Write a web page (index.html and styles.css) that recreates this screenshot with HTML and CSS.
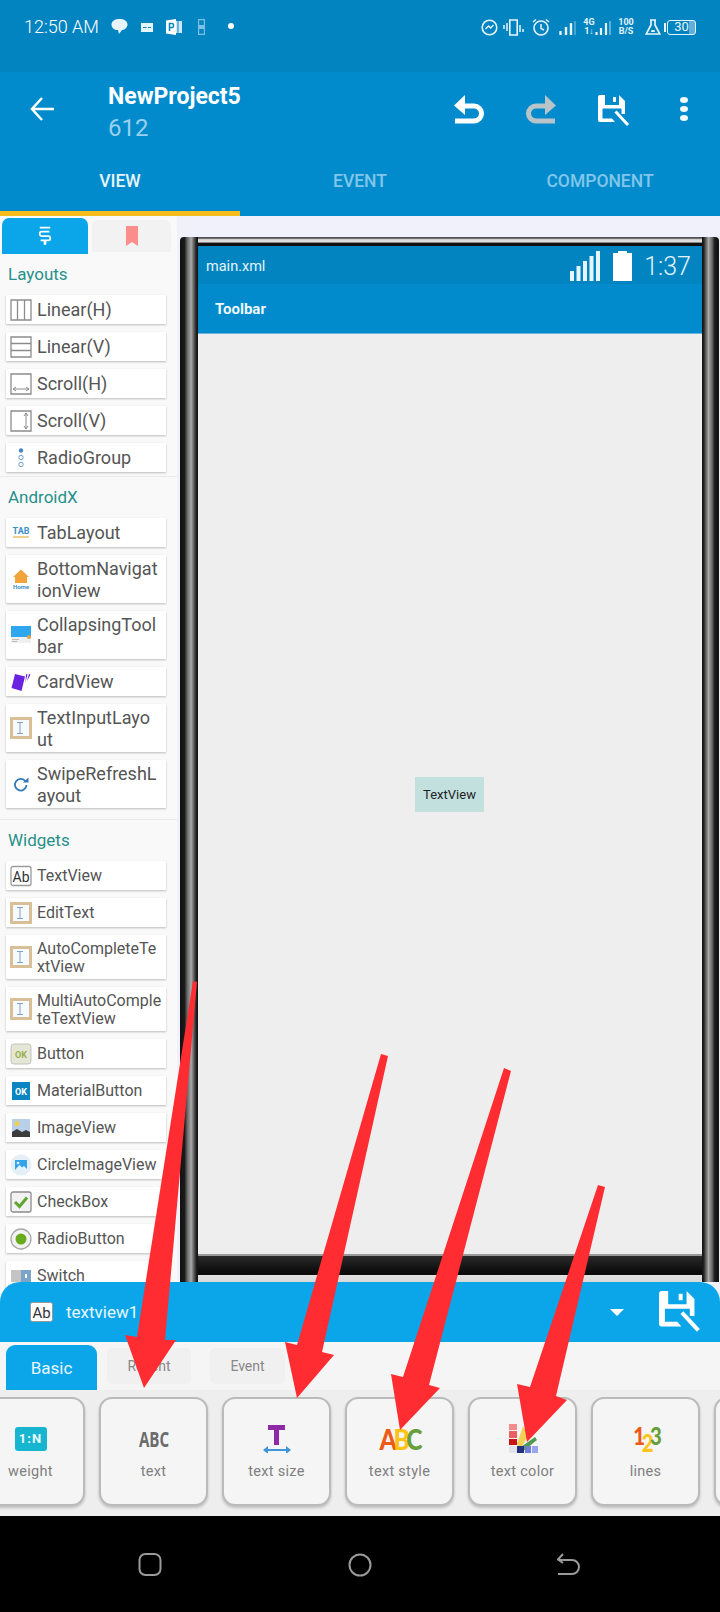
FILE: index.html
```html
<!DOCTYPE html>
<html lang="en">
<head>
  <meta charset="UTF-8" />
  <meta name="viewport" content="width=device-width, initial-scale=1.0"/>
  <title>NewProject5</title>
  <link rel="stylesheet" href="styles.css">
</head>
<body>

  <svg class="defs" width="0" height="0">
    <symbol id="i-edit" viewBox="0 0 22 22">
      <rect x="1.500" y="1.500" width="19" height="19" fill="#f6fafc" stroke="#d9bf98" stroke-width="3"/>
      <path d="M7 5.500h6M7 16.500h6M10 5.500v11" stroke="#7fa3c4" stroke-width="1" fill="none"/>
    </symbol>
    <symbol id="i-save" viewBox="0 0 32 32">
      <path fill="currentColor" fill-rule="evenodd" d="M0 2Q0 0 2 0H21L27 6V19H23.500V13.500H4.500V23.500H14L17 27H2Q0 27 0 25ZM7 0V10H21V0ZM15 2H18V7H15Z"/>
      <path d="M17.500 16.500L30 30" stroke="currentColor" stroke-width="3" fill="none"/>
    </symbol>
    <symbol id="i-undo" viewBox="0 0 32 32">
      <path d="M2 28H21a7.500 7.500 0 0 0 0-15H9" stroke="currentColor" stroke-width="5" fill="none"/>
      <path d="M12 2V22L1 12.500Z" fill="currentColor"/>
    </symbol>
  </svg>

  <!-- Phone status bar -->
  <div class="status">
    <span class="clock">12:50 AM</span>
    <svg class="s-bubble" width="17" height="17" viewBox="0 0 17 17"><path fill="#e6f4fb" d="M8.500 1C13 1 16.500 3 16.500 6.500S13 12 11 12L8 16L7 12C3 12 .5 10 .5 6.500S4 1 8.500 1Z"/></svg>
    <svg class="s-sms" width="12" height="9" viewBox="0 0 12 9"><path fill="#e6f4fb" d="M0 0H12V9H0Z"/><path stroke="#0284c0" stroke-width="1.200" d="M2 4.500H5.500M7 4.500H10"/></svg>
    <svg class="s-ppt" width="16" height="16" viewBox="0 0 16 16"><path fill="#cfe8f6" d="M9 2H16V14H9Z"/><path stroke="#0284c0" d="M12 2V14"/><path fill="#fff" d="M0 1.500L10 0V16L0 14.500Z"/><path fill="none" stroke="#0284c0" stroke-width="1.500" d="M3.500 12V4.500H6Q7.500 4.500 7.500 6.500T6 8.500H3.500"/></svg>
    <svg class="s-sim" width="7" height="16" viewBox="0 0 7 16"><path fill="none" stroke="#7cc0e4" stroke-width="1.200" d="M.6.6H6.400V15.400H.6Z"/><path fill="#7cc0e4" d="M1 6H6V10H1Z"/></svg>
    <i class="s-dot"></i>

    <div class="status-right">
      <svg width="17" height="17" viewBox="0 0 17 17"><circle cx="8.500" cy="8.500" r="7.300" fill="none" stroke="#e6f4fb" stroke-width="1.600"/><path d="M4.500 10L7.500 7L9.500 9L12.500 6" fill="none" stroke="#e6f4fb" stroke-width="1.400"/></svg>
      <svg class="m-vib" width="23" height="17" viewBox="0 0 23 17"><path fill="none" stroke="#e6f4fb" stroke-width="1.600" d="M6.800 1H14.200V16H6.800Z"/><path stroke="#e6f4fb" stroke-width="1.500" d="M4 4V12M1 6V10M17 6V13M20 10V13"/></svg>
      <svg class="m-alarm" width="18" height="18" viewBox="0 0 18 18"><circle cx="9" cy="10" r="7" fill="none" stroke="#e6f4fb" stroke-width="1.600"/><path d="M9 6V10.500L12 12M1 4L4 1.500M17 4L14 1.500" fill="none" stroke="#e6f4fb" stroke-width="1.500"/></svg>
      <svg class="m-sig" width="17" height="15" viewBox="0 0 17 15"><path stroke="#e6f4fb" stroke-width="2.400" d="M1.500 15V11M7 15V7M12 15V3"/><path stroke="#5fb0dc" stroke-width="1.500" d="M16 15V1"/></svg>
      <span class="s-net">4G<br>1↓</span>
      <svg class="m-sig2" width="16" height="15" viewBox="0 0 16 15"><path stroke="#e6f4fb" stroke-width="2.200" d="M1.500 15V12M6 15V8M11 15V3"/><path stroke="#7cc0e4" stroke-width="1.500" d="M15 15V1"/></svg>
      <span class="s-speed">100<br>B/S</span>
      <svg class="m-flask" width="16" height="16" viewBox="0 0 16 16"><path fill="none" stroke="#e6f4fb" stroke-width="1.700" d="M5 1H11M6 1V6L1.200 15H14.800L10 6V1"/><path fill="#e6f4fb" d="M6.500 11H9.500L10 13H6Z"/></svg>
      <i class="s-nub"></i>
      <span class="s-batt">30</span>
    </div>
  </div>

  <!-- App bar -->
  <div class="appbar">
    <svg class="back" width="25" height="32" viewBox="0 0 25 32"><path d="M24 16H3M12 5L2 16L12 27" fill="none" stroke="#fff" stroke-width="2.500"/></svg>
    <div class="titles">
      <div class="title">NewProject5</div>
      <div class="subtitle">612</div>
    </div>
    <svg class="act undo"><use href="#i-undo"/></svg>
    <svg class="act redo"><use href="#i-undo"/></svg>
    <svg class="act save"><use href="#i-save"/></svg>
    <div class="more"><i></i><i></i><i></i></div>
  </div>

  <div class="tabs">
    <div class="tab active">VIEW</div>
    <div class="tab">EVENT</div>
    <div class="tab">COMPONENT</div>
  </div>

  <div class="workspace">
    <!-- Widget palette -->
    <div class="sidebar">
      <div class="side-tabs">
        <div class="side-tab on">
          <svg width="14" height="20" viewBox="0 0 16 22"><path d="M2 1.500H14M13 6H4Q2 6 2 8.500T4 11H12Q14 11 14 13.500T12 16H3" fill="none" stroke="#fff" stroke-width="2"/><path d="M8 16V21" stroke="#fff" stroke-width="3"/></svg>
        </div>
        <div class="side-tab">
          <svg width="14" height="20" viewBox="0 0 14 20"><path d="M1 0H13V20L7 16L1 20Z" fill="#fb8d8a"/></svg>
        </div>
      </div>

      <div class="group">
        <div class="group-name">Layouts</div>
        <div class="item"><svg viewBox="0 0 22 22"><path d="M1 1H21V21H1ZM7.500 1V21M14.500 1V21" fill="#fff" stroke="#8c8c8c" stroke-width="1.300"/></svg>Linear(H)</div>
        <div class="item"><svg viewBox="0 0 22 22"><path d="M1 1H21V21H1ZM1 7.500H21M1 14.500H21" fill="#fff" stroke="#8c8c8c" stroke-width="1.300"/></svg>Linear(V)</div>
        <div class="item"><svg viewBox="0 0 22 22"><path d="M1 1H21V21H1Z" fill="#fff" stroke="#8c8c8c" stroke-width="1.300"/><path d="M3 16H19M3 16L6 14M3 16L6 18M19 16L16 14M19 16L16 18" fill="none" stroke="#8c8c8c"/></svg>Scroll(H)</div>
        <div class="item"><svg viewBox="0 0 22 22"><path d="M1 1H21V21H1Z" fill="#fff" stroke="#8c8c8c" stroke-width="1.300"/><path d="M16 3V19M16 3L14 6M16 3L18 6M16 19L14 16M16 19L18 16" fill="none" stroke="#8c8c8c"/></svg>Scroll(V)</div>
        <div class="item"><svg viewBox="0 0 22 22"><circle cx="11" cy="3.500" r="2.200" fill="#4a86c0"/><circle cx="11" cy="10.500" r="2.200" fill="#fff" stroke="#4a86c0" stroke-width=".8"/><circle cx="11" cy="17.500" r="2.200" fill="#fff" stroke="#4a86c0" stroke-width=".8"/></svg>RadioGroup</div>
      </div>

      <div class="group">
        <div class="group-name">AndroidX</div>
        <div class="item"><svg viewBox="0 0 22 22"><text class="t-tab" x="11" y="12" text-anchor="middle">TAB</text><path d="M3 15H19" stroke="#ecc06a" stroke-width="1.500"/></svg>TabLayout</div>
        <div class="item wrap"><svg viewBox="0 0 22 22"><path d="M11 1.500L19 9H17V15H5V9H3Z" fill="#f2a33a"/><text class="t-home" x="11" y="21" text-anchor="middle">Home</text></svg>BottomNavigat<br>ionView</div>
        <div class="item wrap"><svg viewBox="0 0 22 22"><path d="M1 2H21V13H1Z" fill="#2ea7ee"/><path d="M1 13H21V19H1Z" fill="#f0f0f0"/><circle cx="19" cy="13" r="2" fill="#e8a040"/><path d="M2 15.500H9M2 17.500H7" stroke="#bbb"/></svg>CollapsingTool<br>bar</div>
        <div class="item"><svg viewBox="0 0 22 22"><path d="M5 3L15 5.500L11.500 20L1.500 17Z" fill="#6a24e0"/><path d="M16 3L17.500 3.500L15.500 11ZM19 3L20.500 3.500L17 10Z" fill="#6a24e0"/></svg>CardView</div>
        <div class="item wrap"><svg><use href="#i-edit"/></svg>TextInputLayo<br>ut</div>
        <div class="item wrap last"><svg viewBox="0 0 22 22"><path d="M15.500 8.500A5.800 5.800 0 1 0 16.500 12" fill="none" stroke="#2f77b5" stroke-width="1.800"/><path d="M13 9.500H18.500V4.500Z" fill="#2f77b5"/></svg>SwipeRefreshL<br>ayout</div>
      </div>

      <div class="group small">
        <div class="group-name">Widgets</div>
        <div class="item"><svg viewBox="0 0 22 22"><rect x="1" y="1.500" width="20" height="19" rx="2" fill="#fff" stroke="#9a9a9a" stroke-width="1.300"/><text class="t-ab" x="11" y="16.500" text-anchor="middle">Ab</text></svg>TextView</div>
        <div class="item"><svg><use href="#i-edit"/></svg>EditText</div>
        <div class="item tight"><svg><use href="#i-edit"/></svg>AutoCompleteTe<br>xtView</div>
        <div class="item tight"><svg><use href="#i-edit"/></svg>MultiAutoComple<br>teTextView</div>
        <div class="item"><svg viewBox="0 0 22 22"><rect x="1" y="1" width="20" height="20" rx="3" fill="#e4e6d6" stroke="#c4c4b8"/><text class="t-ok" x="11" y="15" text-anchor="middle" fill="#9ab04a">OK</text></svg>Button</div>
        <div class="item"><svg viewBox="0 0 22 22"><rect x="2" y="2" width="18" height="18" fill="#0a85c2"/><text class="t-ok" x="11" y="15" text-anchor="middle" fill="#fff">OK</text></svg>MaterialButton</div>
        <div class="item"><svg viewBox="0 0 22 22"><rect x="2" y="2" width="18" height="18" fill="#b7cfe8"/><circle cx="7" cy="6.500" r="2.500" fill="#f2cf4a"/><path d="M2 20V15L7 12L12 15L16 13L20 15V20Z" fill="#3c3c3c"/></svg>ImageView</div>
        <div class="item"><svg viewBox="0 0 22 22"><circle cx="11" cy="11" r="10.500" fill="#e6eff5"/><rect x="5" y="6" width="12" height="10" fill="#36a4ea"/><circle cx="8" cy="9" r="1.300" fill="#e3f3fd"/><path d="M5 16L9.500 11L12 13.500L14 12L17 15V16Z" fill="#e3f3fd"/></svg>CircleImageView</div>
        <div class="item"><svg viewBox="0 0 22 22"><rect x="1" y="1" width="20" height="20" rx="2" fill="#f2f2f2" stroke="#8c8c8c" stroke-width="1.300"/><path d="M5 11L9.500 15.500L17 6.500" fill="none" stroke="#5fa52e" stroke-width="3"/></svg>CheckBox</div>
        <div class="item"><svg viewBox="0 0 22 22"><circle cx="11" cy="11" r="10" fill="#f2f2f2" stroke="#a8a8a8" stroke-width="1.300"/><circle cx="11" cy="11" r="5.500" fill="#68ab1e"/></svg>RadioButton</div>
        <div class="item"><svg viewBox="0 0 22 22"><path d="M1 5H21V17H1Z" fill="#c4c4c4"/><path d="M11 5H21V17H11Z" fill="#7ca4c9"/><path d="M15 9H17V13H15Z" fill="#fff"/></svg>Switch</div>
      </div>
    </div>

    <!-- Device preview -->
    <div class="canvas">
      <div class="frame">
        <div class="screen">
          <div class="screen-status">
            <span class="file">main.xml</span>
            <svg class="bars" width="31" height="30" viewBox="0 0 31 30"><path fill="#e6f4fb" d="M0 20H4V30H0ZM6.500 15H10.500V30H6.500ZM13 10H17V30H13ZM19.500 5H23.500V30H19.500ZM26 0H30V30H26Z"/></svg>
            <svg class="battery" width="19" height="30" viewBox="0 0 19 30"><path fill="#fff" d="M5 0H14V2H19V30H0V2H5Z"/></svg>
            <span class="time">1:37</span>
          </div>
          <div class="screen-toolbar">Toolbar</div>
          <div class="screen-body">
            <div class="textview">TextView</div>
          </div>
        </div>
      </div>
    </div>
  </div>

  <!-- Properties panel -->
  <div class="panel">
    <div class="panel-head">
      <svg class="ab" width="23" height="20" viewBox="0 0 23 20"><rect x=".5" y=".5" width="22" height="19" rx="2" fill="#fff" stroke="#9a9a9a"/><text class="t-ab2" x="11.500" y="16" text-anchor="middle">Ab</text></svg>
      <span class="view-id">textview1</span>
      <i class="caret"></i>
      <svg class="panel-save"><use href="#i-save"/></svg>
    </div>
    <div class="subtabs">
      <div class="subtab on">Basic</div>
      <div class="subtab recent">Recent</div>
      <div class="subtab event">Event</div>
    </div>
    <div class="cards">
      <div class="card">
        <div class="card-icon"><span class="ratio">1:N</span></div>
        <div class="card-label">weight</div>
      </div>
      <div class="card">
        <div class="card-icon"><span class="abc">ABC</span></div>
        <div class="card-label">text</div>
      </div>
      <div class="card">
        <div class="card-icon"><svg width="28" height="28" viewBox="0 0 28 28"><path d="M5 0H22V5H16V20H11V5H5Z" fill="#8e2aa6"/><path d="M3 25H25" stroke="#3d96dc" stroke-width="2"/><path d="M0 25L5 21V29ZM28 25L23 21V29Z" fill="#3d96dc"/></svg></div>
        <div class="card-label">text size</div>
      </div>
      <div class="card">
        <div class="card-icon"><span class="fun"><b class="c1">A</b><b class="c2">B</b><b class="c3">C</b></span></div>
        <div class="card-label">text style</div>
      </div>
      <div class="card">
        <div class="card-icon"><svg width="30" height="30" viewBox="0 0 30 30"><path d="M1 0H9V6H1Z" fill="#f08c8c"/><path d="M1 7H9V14H1Z" fill="#ea5f5f"/><path d="M1 15H9V21H1Z" fill="#c81414"/><path d="M1 22H9V29H1Z" fill="#dfe3ea"/><path d="M9 20L15 2L20 12L12 26Z" fill="#f6cf55"/><path d="M10 25L27 13L29 16L13 29Z" fill="#4f9a4f"/><path d="M9 22H16V29H9Z" fill="#25307f"/><path d="M17 22H23V29H17Z" fill="#6f7fd8"/><path d="M24 22H30V29H24Z" fill="#98a6f0"/></svg></div>
        <div class="card-label">text color</div>
      </div>
      <div class="card">
        <div class="card-icon"><span class="fun nums"><b class="c1">1</b><b class="c2">2</b><b class="c3">3</b></span></div>
        <div class="card-label">lines</div>
      </div>
      <div class="card"></div>
    </div>
  </div>

  <!-- System nav -->
  <div class="navbar">
    <svg width="24" height="23" viewBox="0 0 24 23"><rect x="1.500" y="1" width="21" height="21" rx="6" fill="none" stroke="#9a9a9a" stroke-width="2"/></svg>
    <svg width="24" height="24" viewBox="0 0 24 24"><circle cx="12" cy="12" r="10.500" fill="none" stroke="#9a9a9a" stroke-width="2"/></svg>
    <svg width="23" height="23" viewBox="0 0 23 23"><path d="M1 7H15a7 7 0 0 1 0 14H1M6 1L1 6.500L6 10" fill="none" stroke="#9a9a9a" stroke-width="2"/></svg>
  </div>

  <!-- Red arrows painted over the screenshot -->
  <svg class="arrows" width="720" height="1612" viewBox="0 0 720 1612">
    <polygon points="193,981 197,982 165,1340 176,1340 144,1388 125,1335 137,1337"/>
    <polygon points="381,1054 388,1056 322,1352 334,1355 297,1398 285,1342 297,1345"/>
    <polygon points="504,1068 511,1071 429,1385 440,1388 400,1430 391,1374 403,1377"/>
    <polygon points="598,1185 605,1187 556,1396 567,1400 527,1442 517,1384 530,1387"/>
  </svg>

</body>
</html>
```

FILE: styles.css
```css
:root {
  --status-blue: #0284c0;
  --bar-blue: #028bcc;
  --sky: #0ba6ea;
}

body {
  font-family: Roboto, "Liberation Sans", sans-serif;
  margin: 0;
  width: 720px;
  height: 1612px;
  overflow: hidden;
  position: relative;
  background: #000;
}

.defs {
  position: absolute;
}

i {
  display: block;
}

/* status bar */
.status {
  height: 72px;
  background: var(--status-blue);
  display: flex;
  align-items: flex-start;
  padding: 0 24px;
  box-sizing: border-box;
  color: #e6f4fb;
}

.status > * {
  margin-top: 18px;
  flex: none;
}

.clock {
  font-size: 18px;
  font-weight: 300;
  line-height: 18px;
  width: 75px;
  white-space: nowrap;
  color: #fff;
}

.s-bubble { margin-left: 12px; }
.s-sms { margin-left: 13px; margin-top: 23px; }
.s-ppt { margin-left: 13px; margin-top: 19px; }
.s-sim { margin-left: 16px; margin-top: 19px; }

.s-dot {
  width: 6px;
  height: 6px;
  border-radius: 50%;
  background: #fff;
  margin-left: 23px;
  margin-top: 23px;
}

.status-right {
  margin-left: auto;
  display: flex;
  align-items: center;
  height: 18px;
}

.m-vib { margin-left: 5px; }
.m-alarm { margin-left: 6px; }
.m-sig { margin-left: 9px; }
.m-flask { margin-left: 10px; }

.s-net, .s-speed {
  font-size: 9px;
  font-weight: 700;
  line-height: 9px;
  text-align: center;
  white-space: nowrap;
}

.s-net { margin-left: 7px; width: 12px; }
.s-speed { margin-left: 6px; width: 18px; }

.s-nub {
  width: 2px;
  height: 9px;
  background: #e6f4fb;
  margin-left: 3px;
}

.s-batt {
  width: 29px;
  height: 15px;
  box-sizing: border-box;
  border: 1.500px solid #e6f4fb;
  border-radius: 3px;
  margin-left: 1px;
  font-size: 13px;
  line-height: 12px;
  text-align: center;
  background: linear-gradient(90deg, transparent 76%, #5fb0dc 76%);
}

/* app bar */
.appbar {
  height: 94px;
  box-sizing: border-box;
  background: var(--bar-blue);
  display: flex;
  align-items: flex-start;
  padding: 9px 32px 0 30px;
  color: #fff;
}

.appbar svg {
  margin-top: 12px;
  flex: none;
}

.titles {
  margin-left: 53px;
  padding-top: 2px;
}

.title {
  font-size: 23px;
  font-weight: 700;
  line-height: 28px;
  white-space: nowrap;
}

.subtitle {
  font-size: 24px;
  line-height: 30px;
  margin-top: 2px;
  color: #9ad0ee;
}

.act {
  width: 32px;
  height: 32px;
}

.undo { margin-left: auto; }
.redo { margin-left: 40px; color: #b9c4c9; transform: scaleX(-1); }
.appbar .save { margin-left: 41px; margin-top: 14px; }

.more {
  margin-left: 50px;
  margin-top: 16px;
  width: 8px;
  display: flex;
  flex-direction: column;
  gap: 3px;
}

.more i {
  width: 8px;
  height: 6px;
  border-radius: 50%;
  background: #f2f9fd;
}

.tabs {
  height: 50px;
  display: flex;
  background: var(--bar-blue);
}

.tab {
  flex: 1;
  text-align: center;
  font-size: 17.500px;
  font-weight: 500;
  line-height: 30px;
  color: #82c6ea;
}

.tab.active {
  color: #e6f5fc;
  border-bottom: 5px solid #f4bd1c;
  height: 45px;
}

/* workspace */
.workspace {
  height: 1086px;
  display: flex;
}

.sidebar {
  width: 177px;
  flex: none;
  background: #f9f9f9;
  overflow: hidden;
}

.side-tabs {
  display: flex;
  align-items: center;
  gap: 4px;
  padding: 2px 0 0 2px;
}

.side-tab {
  width: 79px;
  height: 32px;
  background: #f2f2f2;
  border-radius: 7px 7px 0 0;
  display: flex;
  align-items: center;
  justify-content: center;
}

.side-tab.on {
  width: 86px;
  height: 36px;
  background: var(--sky);
}

.group {
  display: flex;
  flex-direction: column;
  gap: 8px;
  padding: 0 0 4px 6px;
  border-bottom: 1px solid #e9e9e9;
}

.group-name {
  height: 33px;
  line-height: 41px;
  margin-left: 2px;
  font-size: 17px;
  color: #26908a;
}

.item {
  width: 160px;
  height: 29px;
  box-sizing: border-box;
  padding-left: 31px;
  position: relative;
  background: #fff;
  box-shadow: 0 1px 2px rgba(0, 0, 0, 0.25);
  font-size: 18px;
  line-height: 30px;
  color: #555;
  white-space: nowrap;
  flex: none;
}

.group.small .item {
  font-size: 16px;
}

.item svg {
  position: absolute;
  left: 4px;
  top: 50%;
  width: 22px;
  height: 22px;
  transform: translateY(-50%);
}

.item.wrap {
  height: 48px;
  line-height: 21.500px;
  padding-top: 3px;
}

.item.tight {
  height: 44px;
  line-height: 18px;
  padding-top: 5px;
}

.item.last {
  margin-bottom: 7px;
}

.t-tab { font: 700 9px Roboto, sans-serif; fill: #3d8fc8; }
.t-home { font: 700 6px Roboto, sans-serif; fill: #3d8fc8; }
.t-ab { font: 400 14px Roboto, sans-serif; fill: #333; }
.t-ok { font: 700 9px Roboto, sans-serif; }
.t-ab2 { font: 400 15px Roboto, sans-serif; fill: #333; }

/* device preview */
.canvas {
  flex: 1;
  background: #f1f1fc;
  padding: 21px 1px 0 3px;
  min-width: 0;
}

.frame {
  height: 1045px;
  box-sizing: border-box;
  padding: 9px 17px 26px 18px;
  border-radius: 4px 4px 0 0;
  background:
    linear-gradient(90deg, #111 0, #1a1a1a 25%, #666 40%, #aaa 62%, #777 72%, #222 90%, #111 100%) left top / 18px 100% no-repeat,
    linear-gradient(90deg, #111 0, #222 10%, #777 28%, #aaa 38%, #666 60%, #1a1a1a 75%, #111 100%) right top / 17px 100% no-repeat,
    linear-gradient(#444 0, #666 15%, #ddd 30%, #ddd 55%, #111 70%, #111 100%) left top / 100% 9px no-repeat,
    linear-gradient(#2a2a2a 0, #0c0c0c 60%, #0c0c0c 72%, #e2e2e2 73%, #d8d8d8 100%) left bottom / 100% 26px no-repeat;
}

.screen {
  height: 100%;
  display: flex;
  flex-direction: column;
  border-bottom: 2px solid #999;
  box-sizing: border-box;
}

.screen-status {
  height: 38px;
  flex: none;
  box-sizing: border-box;
  background: var(--status-blue);
  display: flex;
  align-items: center;
  padding: 2px 11px 0 8px;
  color: #e6f4fb;
}

.file {
  font-size: 14.500px;
  margin-right: auto;
}

.battery {
  margin-left: 12px;
}

.time {
  font-size: 25px;
  font-weight: 300;
  margin-left: 12px;
}

.screen-toolbar {
  height: 50px;
  flex: none;
  box-sizing: border-box;
  background: var(--bar-blue);
  border-bottom: 1px solid #6bb6dc;
  padding-left: 17px;
  font-size: 15px;
  font-weight: 700;
  line-height: 51px;
  color: #eef8fd;
}

.screen-body {
  flex: 1;
  background: #eeeeee;
  display: flex;
  align-items: center;
  justify-content: center;
}

.textview {
  width: 69px;
  height: 35px;
  margin: 1px 1px 0 0;
  background: #c2e0de;
  font-size: 13px;
  line-height: 35px;
  text-align: center;
  color: #222;
}

/* properties panel */
.panel {
  margin-top: -20px;
  height: 234px;
  position: relative;
  border-radius: 20px 20px 0 0;
  overflow: hidden;
  background: #f5f5f5;
}

.panel-head {
  height: 60px;
  background: var(--sky);
  display: flex;
  align-items: center;
  padding: 0 19px 0 30px;
}

.view-id {
  margin-left: 13px;
  font-size: 17px;
  color: #e8f6fd;
}

.caret {
  margin-left: auto;
  width: 0;
  height: 0;
  border-left: 7px solid transparent;
  border-right: 7px solid transparent;
  border-top: 7px solid #fff;
}

.panel-save {
  width: 42px;
  height: 42px;
  margin-left: 35px;
  color: #fff;
}

.subtabs {
  height: 48px;
  display: flex;
  align-items: center;
  padding-left: 6px;
  background: #f5f5f5;
}

.subtab {
  height: 36px;
  line-height: 36px;
  text-align: center;
  font-size: 14px;
  color: #888;
  background: #f0f0f0;
  border-radius: 5px;
}

.subtab.on {
  width: 91px;
  height: 45px;
  margin-top: 3px;
  line-height: 47px;
  background: var(--sky);
  color: #e8f6fd;
  font-size: 17px;
  border-radius: 9px 9px 0 0;
}

.subtab.recent { width: 84px; margin-left: 10px; }
.subtab.event { width: 75px; margin-left: 19px; }

.cards {
  height: 126px;
  box-sizing: border-box;
  background: #eeeeee;
  display: flex;
  gap: 14px;
  padding: 7px 0 0;
  overflow: hidden;
}

.card {
  width: 109px;
  height: 109px;
  flex: none;
  box-sizing: border-box;
  background: #f5f5f5;
  border: 2px solid #bbb;
  border-radius: 13px;
  box-shadow: 0 2px 3px rgba(0, 0, 0, 0.2);
  display: flex;
  flex-direction: column;
  align-items: center;
}

.card:first-child {
  margin-left: -24px;
}

.card-icon {
  height: 32px;
  margin-top: 24px;
  display: flex;
  align-items: center;
  justify-content: center;
}

.card-label {
  margin-top: 7px;
  font-size: 14.500px;
  line-height: 20px;
  color: #808080;
  letter-spacing: 0.3px;
}

.ratio {
  width: 32px;
  height: 24px;
  background: #17b5cf;
  border-radius: 3px;
  color: #e8fbff;
  font-size: 13px;
  font-weight: 700;
  line-height: 24px;
  text-align: center;
  letter-spacing: 1px;
}

.abc {
  font-family: "Open Sans", sans-serif;
  font-size: 21px;
  font-weight: 700;
  line-height: 24px;
  color: #6c6c6c;
  white-space: nowrap;
  transform: scaleX(0.72);
}

.fun {
  font-family: Lato, sans-serif;
  font-size: 29px;
  line-height: 30px;
  display: flex;
  transform: scaleX(0.85);
}

.fun b {
  font-weight: 900;
  letter-spacing: -4px;
}

.c1 { color: #ec5a16; }
.c2 { color: #fcc419; }
.c3 { color: #689f38; }

.nums {
  font-size: 24px;
}

.nums .c1 { transform: translateY(-3px); }
.nums .c2 { transform: translateY(4px); }
.nums .c3 { transform: translateY(-3px); }

/* navigation bar */
.navbar {
  height: 96px;
  box-sizing: border-box;
  padding: 37px 140px 0 138px;
  background: #000;
  display: flex;
  align-items: flex-start;
  justify-content: space-between;
}

.arrows {
  position: absolute;
  top: 0;
  left: 0;
  fill: #ff2d32;
}
```
